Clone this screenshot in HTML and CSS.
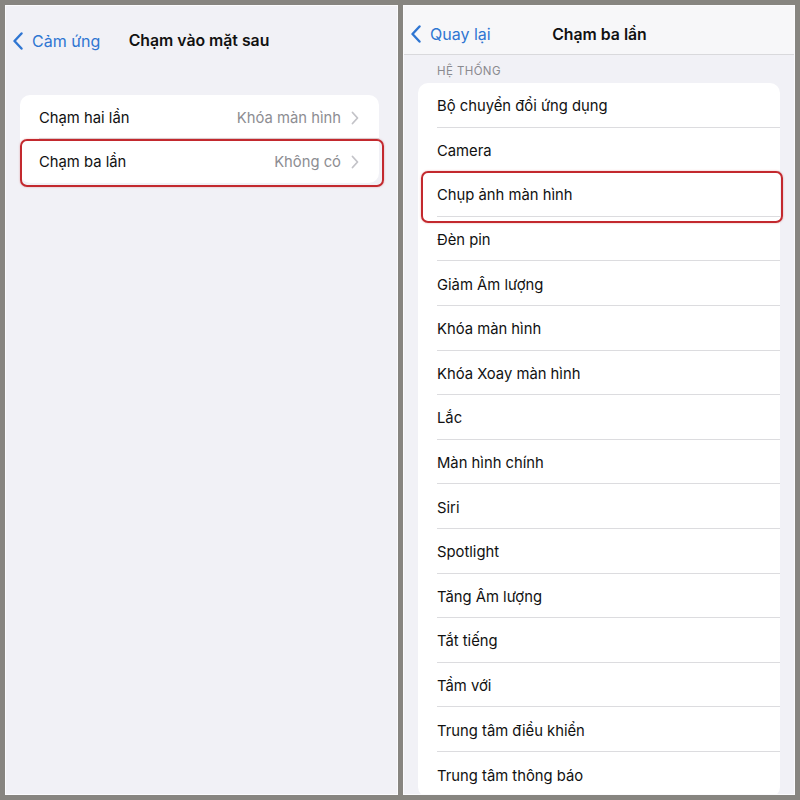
FILE: index.html
```html
<!DOCTYPE html>
<html lang="vi">
  <head>
    <meta charset="utf-8" />
    <meta name="viewport" content="width=device-width, initial-scale=1.0" />
    <link rel="stylesheet" href="styles.css">
  </head>
  <body>
    <div class="frame">
      <!-- left screen -->
      <div class="screen">
        <div class="nav">
          <div class="back">
            <svg class="chev-back" viewBox="0 0 10 18" width="10" height="18"><path d="M8.5 1.5 1.5 9l7 7.5" /></svg>
            <span>Cảm ứng</span>
          </div>
          <div class="nav-title">Chạm vào mặt sau</div>
          <div></div>
        </div>
        <div class="group first">
          <div class="row">
            <div class="cell">
              <span class="label">Chạm hai lần</span>
              <span class="value">Khóa màn hình</span>
              <svg class="chev" viewBox="0 0 8 14" width="8" height="14"><path d="M1.5 1.5 6.5 7l-5 5.5" /></svg>
            </div>
          </div>
          <div class="row">
            <div class="cell">
              <span class="label">Chạm ba lần</span>
              <span class="value">Không có</span>
              <svg class="chev" viewBox="0 0 8 14" width="8" height="14"><path d="M1.5 1.5 6.5 7l-5 5.5" /></svg>
            </div>
            <div class="mark mark-left"></div>
          </div>
        </div>
      </div>

      <!-- right screen -->
      <div class="screen">
        <div class="nav nav-bar">
          <div class="back">
            <svg class="chev-back" viewBox="0 0 10 18" width="10" height="18"><path d="M8.5 1.5 1.5 9l7 7.5" /></svg>
            <span>Quay lại</span>
          </div>
          <div class="nav-title">Chạm ba lần</div>
          <div></div>
        </div>
        <div class="section-head">HỆ THỐNG</div>
        <div class="group list">
          <div class="row"><div class="cell">Bộ chuyển đổi ứng dụng</div></div>
          <div class="row"><div class="cell">Camera</div></div>
          <div class="row"><div class="cell">Chụp ảnh màn hình</div><div class="mark mark-right"></div></div>
          <div class="row"><div class="cell">Đèn pin</div></div>
          <div class="row"><div class="cell">Giảm Âm lượng</div></div>
          <div class="row"><div class="cell">Khóa màn hình</div></div>
          <div class="row"><div class="cell">Khóa Xoay màn hình</div></div>
          <div class="row"><div class="cell">Lắc</div></div>
          <div class="row"><div class="cell">Màn hình chính</div></div>
          <div class="row"><div class="cell">Siri</div></div>
          <div class="row"><div class="cell">Spotlight</div></div>
          <div class="row"><div class="cell">Tăng Âm lượng</div></div>
          <div class="row"><div class="cell">Tắt tiếng</div></div>
          <div class="row"><div class="cell">Tầm với</div></div>
          <div class="row"><div class="cell">Trung tâm điều khiển</div></div>
          <div class="row"><div class="cell">Trung tâm thông báo</div></div>
        </div>
      </div>
    </div>
  </body>
</html>
```

FILE: styles.css
```css
html,
body {
  margin: 0;
  padding: 0;
  height: 100%;
  background: #878580;
}
body {
  font-family: Inter, "Noto Sans", sans-serif;
  font-size: 14.8px;
  color: #111;
  overflow: hidden;
}
.frame {
  display: flex;
  gap: 5px;
  padding: 5px;
  height: 800px;
  box-sizing: border-box;
}
.screen {
  flex: 0 0 393px;
  height: 790px;
  background: #f1f1f6;
  border: 1px solid #fbfbfd;
  box-sizing: border-box;
  overflow: hidden;
}
.screen + .screen {
  flex-basis: 392px;
}
.nav {
  display: grid;
  grid-template-columns: 1fr auto 1fr;
  align-items: center;
  height: 69px;
  padding: 0 12px 0 7px;
}
.nav-bar {
  height: 49px;
  padding: 8px 6px 0 7px;
  box-sizing: border-box;
  background: #f7f7f9;
  border-bottom: 1px solid #d9d9dc;
}
.back {
  display: flex;
  align-items: center;
  gap: 9px;
  color: #2f76d2;
  font-size: 16px;
}
.chev-back {
  fill: none;
  stroke: #2f76d2;
  stroke-width: 2.4;
  stroke-linecap: round;
  stroke-linejoin: round;
}
.nav-title {
  font-weight: 600;
  font-size: 15.8px;
  color: #111;
}
.group {
  margin: 0 18px 0 14px;
  background: #fff;
  border-radius: 10px;
}
.first {
  margin-top: 20px;
}
.list {
  margin: 0 14px 0 14px;
}
.row {
  position: relative;
  height: 44.6px;
  padding-left: 19px;
}
.first .row {
  height: 44px;
}
.cell {
  display: flex;
  align-items: center;
  height: 100%;
  box-sizing: border-box;
  border-bottom: 1px solid #dcdcdf;
  padding-right: 20px;
}
.list .cell {
  padding-top: 3px;
}
.first .cell {
  padding-top: 2px;
}
.row:last-child .cell {
  border-bottom: none;
}
.label {
  flex: 1;
}
.value {
  color: #8d8d92;
  margin-right: 10px;
}
.chev {
  fill: none;
  stroke: #c3c3c8;
  stroke-width: 1.8;
  stroke-linecap: round;
  stroke-linejoin: round;
}
.section-head {
  padding: 9px 0 5px 33px;
  line-height: 14px;
  font-size: 11.5px;
  letter-spacing: 0.4px;
  color: #8a8a8f;
}
.mark {
  position: absolute;
  border: 2px solid #c3292e;
  border-radius: 7px;
  box-shadow: 0 0 2px rgba(195, 41, 46, 0.4);
}
.mark-left {
  top: 0;
  bottom: -4px;
  left: 0;
  right: -5px;
}
.mark-right {
  top: -1px;
  bottom: -6px;
  left: 3px;
  right: -3px;
}
```
